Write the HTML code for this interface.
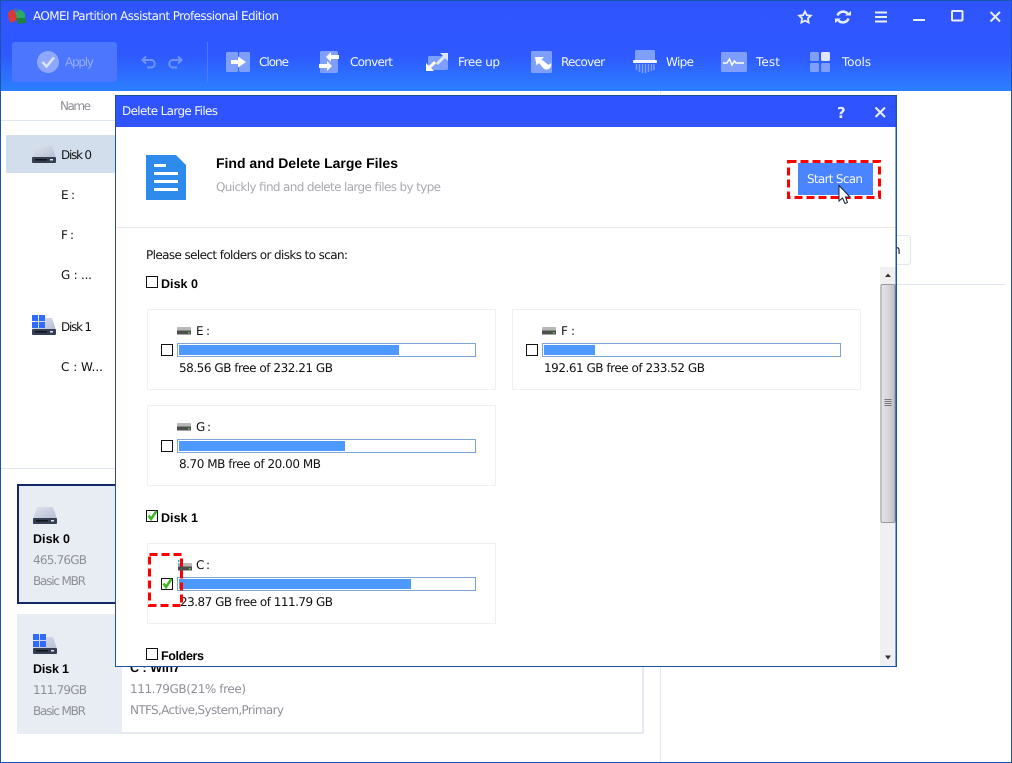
<!DOCTYPE html>
<html><head><meta charset="utf-8"><title>AOMEI Partition Assistant</title>
<style>
html,body{margin:0;padding:0;width:1012px;height:763px;overflow:hidden;background:#fff}
svg{display:block}
text{font-family:"DejaVu Sans","Liberation Sans",sans-serif;font-size:12px;fill:#111;text-rendering:geometricPrecision}
.b{font-family:"Liberation Sans",sans-serif;font-weight:bold;font-size:12.500px;fill:#000}
.w{fill:#f4f7ff}
.g{fill:#8f8f98}
.s{fill:#a9a9b0}
</style></head><body>
<svg width="1012" height="763" viewBox="0 0 1012 763" xmlns="http://www.w3.org/2000/svg">
<defs>
<linearGradient id="hd" x1="0" y1="0" x2="0" y2="1"><stop offset="0" stop-color="#2f54ff"/><stop offset=".6" stop-color="#2f58ff"/><stop offset="1" stop-color="#2b80ff"/></linearGradient>
<linearGradient id="th" x1="0" y1="0" x2="1" y2="0"><stop offset="0" stop-color="#e4e4e6"/><stop offset=".5" stop-color="#d8d8dc"/><stop offset="1" stop-color="#bcbcc2"/></linearGradient>
<linearGradient id="dk" x1="0" y1="0" x2="1" y2="1"><stop offset="0" stop-color="#dfe3ee"/><stop offset="1" stop-color="#b4bdd2"/></linearGradient>
<g id="disk"><path d="M4 0H20L24 12H0Z" fill="url(#dk)"/><rect x="0" y="11" width="24" height="6" rx="1" fill="#363e52"/><rect x="3" y="13" width="12" height="1.500" fill="#10131c"/><rect x="18" y="13" width="3" height="1.500" fill="#dfe6f5"/></g>
<g id="win"><rect x="0" y="0" width="6" height="6" fill="#2f6bff"/><rect x="7" y="0" width="6" height="6" fill="#2f6bff"/><rect x="0" y="7" width="6" height="6" fill="#2f6bff"/><rect x="7" y="7" width="6" height="6" fill="#2f6bff"/></g>
<g id="dr"><rect x="0" y="0" width="14" height="4" rx="1" fill="#b8b8b8"/><rect x="0" y="3.500" width="14" height="4" fill="#4e4e4e"/><rect x="11" y="5" width="1.500" height="1.500" fill="#4fe04f"/></g>
<g id="ck"><rect x=".5" y=".5" width="11" height="11" fill="#fff" stroke="#111"/></g>
<g id="ckg"><rect x=".5" y=".5" width="11" height="11" fill="#fff" stroke="#111"/><path d="M2.500 5.500L5 9L10.500 1" fill="none" stroke="#3fb81e" stroke-width="2.600"/></g>
</defs>

<!-- app chrome -->
<rect x="0" y="0" width="1012" height="91" fill="url(#hd)"/>
<rect x=".5" y=".5" width="1011" height="762" fill="none" stroke="#1a55ad"/>
<!-- logo -->
<path d="M8 14C9 10 13 9 17 10V20L11 23C9 21 8 17 8 14Z" fill="#d93a35"/>
<path d="M14 9C18 8 23 10 25 14V18L17 18Z" fill="#2fa860"/>
<path d="M16 18H26V23L18 24Z" fill="#1f7f45"/>
<path d="M14 9C16 8 19 9 20 11L15 12Z" fill="#3b6fd8"/>
<text x="33" y="20" textLength="246" class="w">AOMEI Partition Assistant Professional Edition</text>

<!-- window controls -->
<path d="M805 11.500L806.800 15.200L810.800 15.700L807.900 18.500L808.600 22.500L805 20.600L801.400 22.500L802.100 18.500L799.200 15.700L803.200 15.200Z" fill="none" stroke="#e8edff" stroke-width="1.800"/>
<path d="M837.500 15.500A6 6 0 0 1 847.500 13.500M848.500 18.500A6 6 0 0 1 838.500 20.500" fill="none" stroke="#e8edff" stroke-width="2.500"/>
<path d="M845 15.500H851V11ZM841 18.500H835V23Z" fill="#e8edff"/>
<path d="M875 12.500H887M875 17H887M875 21.500H887" stroke="#e8edff" stroke-width="2"/>
<rect x="913" y="19" width="12" height="2" fill="#e8edff"/>
<rect x="952" y="11" width="10.500" height="9.500" rx="1" fill="none" stroke="#e8edff" stroke-width="2"/>
<path d="M990.500 12L1000 21.500M1000 12L990.500 21.500" stroke="#e8edff" stroke-width="2"/>

<!-- toolbar -->
<rect x="12" y="42" width="105" height="40" rx="3" fill="#4d76ff"/>
<circle cx="48" cy="62" r="11" fill="#8ea8ff"/>
<path d="M42.500 62L46.500 66.500L54 57.500" fill="none" stroke="#dbe4ff" stroke-width="2.500"/>
<text x="65" y="66" textLength="29" style="fill:#93abff">Apply</text>
<path d="M146 56.500L142.500 60L146 63.500M143 60H151.500A3.800 3.800 0 0 1 151.500 67.500H147" fill="none" stroke="#6f93ff" stroke-width="2"/>
<path d="M178 56.500L181.500 60L178 63.500M181 60H172.500A3.800 3.800 0 0 0 172.500 67.500H177" fill="none" stroke="#6f93ff" stroke-width="2"/>
<rect x="207" y="42" width="1" height="40" fill="#4f78ff"/>

<!-- Clone -->
<rect x="226" y="52" width="12" height="20" rx="1.500" fill="#7f9fff"/><rect x="239" y="52" width="11" height="20" rx="1.500" fill="#7f9fff"/>
<path d="M231 60H238V56.500L246 62L238 67.500V64H231Z" fill="#fff"/>
<text x="259" y="66" textLength="30" class="w">Clone</text>
<!-- Convert -->
<rect x="320" y="51" width="18" height="22" rx="1.500" fill="#7f9fff"/>
<path d="M339 55V59H331V62L326 57L331 52V55Z" fill="#fff"/>
<path d="M319 64V68H327V71L332 66L327 61V64Z" fill="#fff"/>
<text x="350" y="66" textLength="43" class="w">Convert</text>
<!-- Free up -->
<rect x="428" y="56" width="20" height="14" rx="1.500" fill="#7f9fff"/>
<path d="M437 64L444 57" stroke="#dfe6ff" stroke-width="3"/><path d="M440 53H448V61Z" fill="#dfe6ff"/>
<path d="M429 68L435 62" stroke="#fff" stroke-width="3"/><path d="M426 63V71H434Z" fill="#fff"/>
<text x="458" y="66" textLength="42" class="w">Free up</text>
<!-- Recover -->
<rect x="531" y="51" width="21" height="22" rx="1.500" fill="#7f9fff"/>
<path d="M535 57H544L541.500 59.500L548 64.500C549 65 550 64 551 63C552 66 550 70 546 69.500C544 69.500 543 68 539 63L536.500 65.500Z" fill="#fff"/>
<text x="561" y="66" textLength="44" class="w">Recover</text>
<!-- Wipe -->
<rect x="635" y="50" width="20" height="11" rx="1.500" fill="#7f9fff"/>
<rect x="633" y="60" width="24" height="3" rx="1" fill="#f2f5ff"/>
<path d="M636.500 64V70M639.500 64V72M642.500 64V73M645.500 64V73M648.500 64V72M651.500 64V71M654 64V70" stroke="#7f9fff" stroke-width="1.500"/>
<text x="666" y="66" textLength="28" class="w">Wipe</text>
<!-- Test -->
<rect x="721" y="52" width="26" height="20" rx="1.500" fill="#7f9fff"/>
<path d="M723 63H727L729.500 59L732 65L734.500 61L736 63H744" fill="none" stroke="#fff" stroke-width="1.500"/>
<text x="756" y="66" textLength="24" class="w">Test</text>
<!-- Tools -->
<rect x="810" y="52" width="9" height="9" rx="1.500" fill="#7f9fff"/><rect x="821" y="52" width="9" height="9" rx="1.500" fill="#dfe6ff"/><rect x="810" y="63" width="9" height="9" rx="1.500" fill="#7f9fff"/><rect x="821" y="63" width="9" height="9" rx="1.500" fill="#7f9fff"/>
<text x="842" y="66" textLength="29" class="w">Tools</text>

<!-- background -->
<rect x="660" y="91" width="1" height="671" fill="#e2e7f0"/>
<rect x="1" y="120" width="114" height="1" fill="#dfe6ef"/>
<text x="60" y="110" textLength="31" class="g">Name</text>
<rect x="6" y="135" width="109" height="38" fill="#d3deed"/>
<use href="#disk" x="32" y="146"/>
<text x="61" y="159" textLength="31">Disk 0</text>
<text x="61" y="199" textLength="14">E :</text>
<text x="61" y="239" textLength="13">F :</text>
<text x="61" y="279" textLength="31">G : ...</text>
<use href="#disk" x="32" y="318"/>
<use href="#win" x="32" y="315"/>
<text x="61" y="331" textLength="31">Disk 1</text>
<text x="61" y="371" textLength="42">C : W...</text>
<rect x="1" y="468" width="659" height="1" fill="#dfe6ef"/>

<rect x="18" y="485" width="110" height="118" fill="#e8ecf3" stroke="#14286e" stroke-width="2"/>
<use href="#disk" x="33" y="507"/>
<text x="33" y="543" textLength="37" class="b">Disk 0</text>
<text x="33" y="564" textLength="54" class="g">465.76GB</text>
<text x="33" y="585" textLength="53" class="g">Basic MBR</text>

<rect x="17" y="614" width="105" height="120" fill="#e8ecf3"/>
<use href="#disk" x="33" y="637"/>
<use href="#win" x="33" y="634"/>
<text x="33" y="673" textLength="36" class="b">Disk 1</text>
<text x="33" y="694" textLength="54" class="g">111.79GB</text>
<text x="33" y="715" textLength="53" class="g">Basic MBR</text>
<rect x="122" y="732" width="522" height="2" fill="#e6e9ef"/>
<rect x="642" y="600" width="2" height="134" fill="#e6e9ef"/>
<text x="130" y="672" textLength="50" class="b">C : Win7</text>
<text x="130" y="693" textLength="116" class="g">111.79GB(21% free)</text>
<text x="130" y="714" textLength="154" class="g">NTFS,Active,System,Primary</text>

<rect x="860" y="235.500" width="50.500" height="29" rx="3" fill="#fff" stroke="#dfe6ef"/>
<text x="893" y="254" textLength="7">n</text>
<rect x="897" y="284" width="108" height="1" fill="#dfe6ef"/>

<!-- dialog -->
<rect x="115.500" y="95.500" width="781" height="571" fill="#fff" stroke="#1a52a8"/>
<rect x="116" y="96" width="780" height="31" fill="#2f54ff"/>
<text x="122" y="115" textLength="96" class="w">Delete Large Files</text>
<text x="837" y="118" textLength="10" style="font-size:15px;font-weight:bold;fill:#e8edff">?</text>
<path d="M875.500 107.500L885 117M885 107.500L875.500 117" stroke="#e8edff" stroke-width="2"/>

<path d="M146 155H176L186 165V200H146Z" fill="#2d8ceb"/>
<rect x="154" y="164" width="12" height="3" fill="#fff"/><rect x="154" y="172" width="24" height="3" fill="#fff"/><rect x="154" y="180" width="24" height="3" fill="#fff"/><rect x="154" y="188" width="24" height="3" fill="#fff"/>
<text x="216" y="168" textLength="182" class="b" style="font-size:14px">Find and Delete Large Files</text>
<text x="216" y="191" textLength="225" class="s">Quickly find and delete large files by type</text>

<rect x="798" y="163" width="75" height="32" fill="#4a84ff"/>
<text x="807" y="183" textLength="56" class="w">Start Scan</text>
<rect x="788.500" y="161.500" width="91" height="36" fill="none" stroke="#ff0000" stroke-width="3" stroke-dasharray="8 4"/>

<rect x="116" y="227" width="780" height="1" fill="#e8e8e8"/>
<text x="146" y="259" textLength="202">Please select folders or disks to scan:</text>

<use href="#ck" x="146" y="276"/>
<text x="161" y="288" textLength="37" class="b">Disk 0</text>

<rect x="147.500" y="309.500" width="348" height="80" fill="#fff" stroke="#f0f0f0"/>
<use href="#dr" x="177" y="327"/>
<text x="196" y="335" textLength="14">E :</text>
<use href="#ck" x="161" y="344"/>
<rect x="177.500" y="343.500" width="298" height="13" fill="#fff" stroke="#7fa5d8"/>
<rect x="179" y="345" width="220" height="10" fill="#4d99ff"/>
<text x="179" y="372" textLength="154">58.56 GB free of 232.21 GB</text>

<rect x="512.500" y="309.500" width="348" height="80" fill="#fff" stroke="#f0f0f0"/>
<use href="#dr" x="542" y="327"/>
<text x="561" y="335" textLength="14">F :</text>
<use href="#ck" x="526" y="344"/>
<rect x="542.500" y="343.500" width="298" height="13" fill="#fff" stroke="#7fa5d8"/>
<rect x="544" y="345" width="51" height="10" fill="#4d99ff"/>
<text x="544" y="372" textLength="161">192.61 GB free of 233.52 GB</text>

<rect x="147.500" y="405.500" width="348" height="80" fill="#fff" stroke="#f0f0f0"/>
<use href="#dr" x="177" y="423"/>
<text x="196" y="431" textLength="15">G :</text>
<use href="#ck" x="161" y="440"/>
<rect x="177.500" y="439.500" width="298" height="13" fill="#fff" stroke="#7fa5d8"/>
<rect x="179" y="441" width="166" height="10" fill="#4d99ff"/>
<text x="179" y="468" textLength="142">8.70 MB free of 20.00 MB</text>

<use href="#ckg" x="146" y="510"/>
<text x="161" y="522" textLength="37" class="b">Disk 1</text>

<rect x="147.500" y="543.500" width="348" height="80" fill="#fff" stroke="#f0f0f0"/>
<use href="#dr" x="178" y="563"/>
<rect x="178" y="560" width="1.500" height="2" fill="#33b0e8"/><rect x="178" y="563.500" width="1.500" height="2" fill="#33b0e8"/>
<text x="196" y="569" textLength="14">C :</text>
<use href="#ckg" x="161" y="578"/>
<rect x="177.500" y="577.500" width="298" height="13" fill="#fff" stroke="#7fa5d8"/>
<rect x="179" y="579" width="232" height="10" fill="#4d99ff"/>
<text x="180" y="606" textLength="153">23.87 GB free of 111.79 GB</text>
<rect x="149.500" y="554.500" width="32" height="51" fill="none" stroke="#ff0000" stroke-width="3" stroke-dasharray="8 4"/>

<use href="#ck" x="146" y="648"/>
<text x="161" y="660" textLength="43" class="b">Folders</text>

<!-- scrollbar -->
<rect x="880" y="267" width="16" height="399" fill="#f0f0f0"/>
<path d="M885 277L888 273.500L891 277Z" fill="#333"/>
<rect x="881" y="284.500" width="14" height="238" rx="1.500" fill="url(#th)" stroke="#999"/>
<path d="M884.500 399.500H891.500M884.500 401.500H891.500M884.500 403.500H891.500M884.500 405.500H891.500" stroke="#777"/>
<path d="M885 655.500L888 659.500L891 655.500Z" fill="#333"/>
<rect x="895.500" y="95.500" width="1" height="571" fill="#1a52a8"/>

<!-- cursor -->
<path d="M839 185.500V201L842.500 198L845 203.500L847.500 202.500L845.500 197H850Z" fill="#fff" stroke="#14203c"/>
</svg>
</body></html>
